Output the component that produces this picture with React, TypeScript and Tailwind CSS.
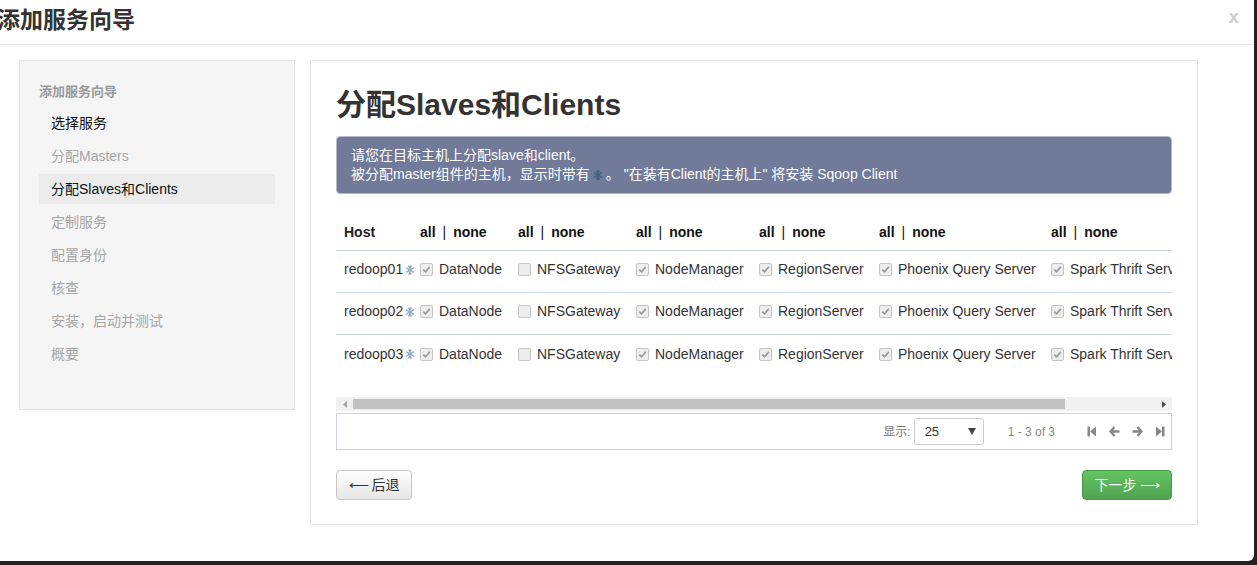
import React from "react";

const FONT = "font-['Liberation_Sans','Noto_Sans_CJK_SC',sans-serif]";

const navItems: { label: string; state: "done" | "active" | "todo" }[] = [
  { label: "选择服务", state: "done" },
  { label: "分配Masters", state: "todo" },
  { label: "分配Slaves和Clients", state: "active" },
  { label: "定制服务", state: "todo" },
  { label: "配置身份", state: "todo" },
  { label: "核查", state: "todo" },
  { label: "安装，启动并测试", state: "todo" },
  { label: "概要", state: "todo" },
];

const cols: { name: string; checked: boolean; w: string }[] = [
  { name: "DataNode", checked: true, w: "w-[98px]" },
  { name: "NFSGateway", checked: false, w: "w-[118px]" },
  { name: "NodeManager", checked: true, w: "w-[123px]" },
  { name: "RegionServer", checked: true, w: "w-[120px]" },
  { name: "Phoenix Query Server", checked: true, w: "w-[172px]" },
  { name: "Spark Thrift Server", checked: true, w: "w-[200px]" },
];

function Flake({ color, className }: { color: string; className?: string }) {
  return (
    <svg width="10" height="10" viewBox="0 0 10 10" className={`shrink-0 ${className ?? ""}`}>
      <g stroke={color} strokeWidth="1.4" strokeLinecap="round" fill="none">
        <path d="M5 0.8 V9.2" />
        <path d="M1.4 2.9 L8.6 7.1" />
        <path d="M1.4 7.1 L8.6 2.9" />
        <path d="M3.8 1.2 L5 2.3 L6.2 1.2" />
        <path d="M3.8 8.8 L5 7.7 L6.2 8.8" />
      </g>
    </svg>
  );
}

function Check({ checked }: { checked: boolean }) {
  return (
    <span className="inline-flex w-[13px] h-[13px] shrink-0 items-center justify-center rounded-[2px] border border-[#c4c4c4] bg-[#ededed]">
      {checked && (
        <svg width="9" height="9" viewBox="0 0 9 9">
          <path d="M1.3 4.6 L3.5 6.8 L7.8 1.9" fill="none" stroke="#9b9b9b" strokeWidth="1.7" />
        </svg>
      )}
    </span>
  );
}

function AllNone() {
  return (
    <span className="flex items-center font-bold text-[14px] text-[#111]">
      <span>all</span>
      <span className="mx-[7px] font-normal">|</span>
      <span>none</span>
    </span>
  );
}

export default function App() {
  const hosts = ["redoop01", "redoop02", "redoop03"];
  return (
    <div className={`w-[1257px] h-[565px] bg-[#222] overflow-hidden ${FONT}`}>
      <div className="w-[1254px] h-[561px] bg-white rounded-br-[6px] overflow-hidden flex flex-col">
        {/* header */}
        <div className="h-[45px] shrink-0 border-b border-[#e8e8e8] flex items-center justify-between pb-[4px]">
          <h3 className="-ml-[3px] text-[23px] font-bold text-[#333] leading-[28px]">添加服务向导</h3>
          <span className="mr-[15px] text-[19px] font-bold text-[#cfcfcf] leading-none -mt-[7px]">x</span>
        </div>

        {/* body */}
        <div className="flex items-start gap-[15px] pl-[19px] pt-[15px]">
          {/* sidebar */}
          <div className="w-[276px] h-[350px] shrink-0 bg-[#f5f5f5] border border-[#e3e3e3] pl-[19px] pr-[19px] pt-[22px]">
            <div className="text-[13px] font-bold text-[#999] leading-[18px] mb-[7px]">添加服务向导</div>
            <div className="flex flex-col gap-[3px]">
              {navItems.map((it) => (
                <div
                  key={it.label}
                  className={`h-[30px] flex items-center pl-[12px] text-[14px] ${
                    it.state === "active" ? "bg-[#ebebeb] text-[#111]" : it.state === "done" ? "text-[#111]" : "text-[#a6a6a6]"
                  }`}
                >
                  {it.label}
                </div>
              ))}
            </div>
          </div>

          {/* main */}
          <div className="w-[888px] h-[465px] shrink-0 border border-[#e3e3e3] px-[25px] pt-[27px]">
            <h2 className="text-[30px] font-bold text-[#333] leading-[33px]">分配Slaves和Clients</h2>
            <div className="mt-[15px] bg-[#717a98] border border-[#b7bccb] rounded-[4px] px-[14px] pt-[9px] pb-[9px] text-[14px] leading-[19px] text-white">
              <div>请您在目标主机上分配slave和client。</div>
              <div className="flex items-center">
                被分配master组件的主机，显示时带有
                <Flake color="#3d5f84" className="mx-[3px]" />
                。 "在装有Client的主机上" 将安装 Sqoop Client
              </div>
            </div>

            {/* table */}
            <div className="mt-[20px] w-[836px] overflow-hidden">
              <div className="flex h-[37px] items-center border-b border-[#c8d4de] whitespace-nowrap">
                <div className="w-[76px] shrink-0 pl-[8px] font-bold text-[14px] text-[#222]">Host</div>
                {cols.map((c, i) => (
                  <div key={i} className={`${c.w} shrink-0 pl-[8px]`}>
                    <AllNone />
                  </div>
                ))}
              </div>
              {hosts.map((h, ri) => (
                <div
                  key={h}
                  className={`flex h-[42px] items-center pb-[4px] whitespace-nowrap ${ri < 2 ? "border-b border-[#c8d4de]" : ""}`}
                >
                  <div className="w-[76px] shrink-0 pl-[8px] flex items-center text-[14px] text-[#333]">
                    <span className="shrink-0">{h}</span>
                    <Flake color="#94acc6" className="ml-[2px]" />
                  </div>
                  {cols.map((c, i) => (
                    <div key={i} className={`${c.w} shrink-0 pl-[8px] flex items-center gap-[6px] text-[14px] text-[#333]`}>
                      <Check checked={c.checked} />
                      {c.name}
                    </div>
                  ))}
                </div>
              ))}
              <div className="h-[20px]" />
              {/* scrollbar */}
              <div className="h-[14px] bg-[#f1f1f1] flex items-center">
                <span className="w-[17px] flex justify-center">
                  <svg width="4" height="7" viewBox="0 0 4 7"><path d="M4 0 L0 3.5 L4 7 Z" fill="#a3a3a3" /></svg>
                </span>
                <span className="w-[712px] h-[10px] bg-[#c1c1c1]" />
                <span className="flex-1" />
                <span className="w-[17px] flex justify-center">
                  <svg width="4" height="7" viewBox="0 0 4 7"><path d="M0 0 L4 3.5 L0 7 Z" fill="#505050" /></svg>
                </span>
              </div>
            </div>

            {/* pagination */}
            <div className="mt-[2px] h-[37px] border border-[#c8d4de] flex items-center justify-end pr-[6px] text-[12px] text-[#777]">
              <span>显示:</span>
              <div className="ml-[3px] w-[70px] h-[27px] border border-[#ccc] rounded-[3px] flex items-center justify-between pl-[10px] pr-[7px] text-[13px] text-[#333]">
                <span>25</span>
                <svg width="8" height="7" viewBox="0 0 8 7"><path d="M0 0 H8 L4 7 Z" fill="#444" /></svg>
              </div>
              <span className="ml-[24px] text-[12px] text-[#888]">1 - 3 of 3</span>
              <div className="ml-[32px] flex items-center gap-[12px]">
                <svg width="10" height="11" viewBox="0 0 10 11">
                  <rect x="0.5" y="0.5" width="2.5" height="10" fill="#888" />
                  <path d="M9 0.5 L3 5.5 L9 10.5 Z" fill="#888" />
                </svg>
                <svg width="11" height="11" viewBox="0 0 11 11">
                  <path d="M5.5 1 L1.5 5.5 L5.5 10 M1.8 5.5 H10.5" fill="none" stroke="#888" strokeWidth="2.4" />
                </svg>
                <svg width="11" height="11" viewBox="0 0 11 11">
                  <path d="M5.5 1 L9.5 5.5 L5.5 10 M9.2 5.5 H0.5" fill="none" stroke="#888" strokeWidth="2.4" />
                </svg>
                <svg width="10" height="11" viewBox="0 0 10 11">
                  <path d="M1 0.5 L7 5.5 L1 10.5 Z" fill="#888" />
                  <rect x="7" y="0.5" width="2.5" height="10" fill="#888" />
                </svg>
              </div>
            </div>

            {/* buttons */}
            <div className="mt-[20px] flex justify-between">
              <button className="w-[76px] h-[30px] rounded-[4px] border border-[#c5c5c5] bg-gradient-to-b from-white to-[#e6e6e6] text-[14px] text-[#333] flex items-center justify-center gap-[3px]">
                <span>⟵</span>
                <span>后退</span>
              </button>
              <button className="w-[90px] h-[30px] rounded-[4px] border border-[#4a9a4a] bg-gradient-to-b from-[#62c462] to-[#51a351] text-[14px] text-white flex items-center justify-center gap-[3px]">
                <span>下一步</span>
                <span>⟶</span>
              </button>
            </div>
          </div>
        </div>
      </div>
    </div>
  );
}
